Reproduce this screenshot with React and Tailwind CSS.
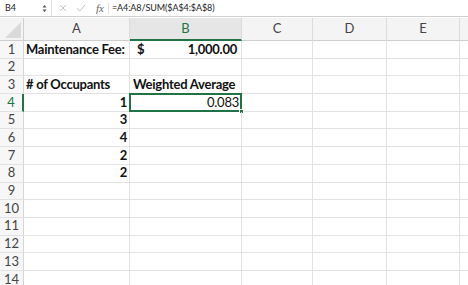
import React from "react";

const cols = ["A", "B", "C", "D", "E"];
const F = { fontFamily: "Lato, 'Open Sans', sans-serif" };

function Cell({ children, className = "" }) {
  return (
    <div className={`border-r border-b border-[#e2e2e2] flex items-center overflow-visible whitespace-nowrap ${className}`}>
      {children}
    </div>
  );
}

export default function App() {
  const rows = [];
  for (let r = 1; r <= 14; r++) rows.push(r);
  const data = {
    1: { a: <span className="font-bold pl-[2px]">Maintenance Fee:</span>, b: <div className="flex w-full justify-between font-bold pl-[7px] pr-[4px]"><span>$</span><span>1,000.00</span></div> },
    3: { a: <span className="font-bold pl-[2px]">&#35; of Occupants</span>, b: <span className="font-bold pl-[3px]">Weighted Average</span> },
    4: { a: <span className="font-bold w-full text-right pr-[2px]">1</span>, b: <span className="w-full text-right pr-[2px]">0.083</span> },
    5: { a: <span className="font-bold w-full text-right pr-[2px]">3</span> },
    6: { a: <span className="font-bold w-full text-right pr-[2px]">4</span> },
    7: { a: <span className="font-bold w-full text-right pr-[2px]">2</span> },
    8: { a: <span className="font-bold w-full text-right pr-[2px]">2</span> },
  };
  return (
    <div className="w-[468px] h-[285px] overflow-hidden bg-white text-[#111]" style={F}>
      {/* formula bar */}
      <div className="h-[17px] flex items-center border-b border-[#d0d0d0] bg-white text-[9px]">
        <div className="w-[52px] h-full flex items-center justify-between pl-[5px] pr-[4px] border-r border-[#e0e0e0]">
          <span className="text-[#222]">B4</span>
          <svg width="5" height="9" viewBox="0 0 5 9"><path d="M0.5 3.5 L2.5 1 L4.5 3.5 Z M0.5 5.5 L2.5 8 L4.5 5.5 Z" fill="#555" /></svg>
        </div>
        <div className="flex items-center gap-[9px] pl-[7px]">
          <svg width="8" height="8" viewBox="0 0 8 8"><path d="M1 1 L7 7 M7 1 L1 7" stroke="#c4c4c4" strokeWidth="1" /></svg>
          <svg width="10" height="8" viewBox="0 0 10 8"><path d="M1 4.2 L3.8 7 L9 1" stroke="#c4c4c4" strokeWidth="1" fill="none" /></svg>
        </div>
        <span className="italic text-[11px] text-[#666] ml-[10px] leading-none" style={{ fontFamily: "'Liberation Serif', serif" }}>fx</span>
        <div className="h-[11px] border-l border-[#e0e0e0] ml-[4px] mr-[3px]" />
        <span className="text-[9px] text-[#222] tracking-[-0.1px]">=A4:A8/SUM($A$4:$A$8)</span>
      </div>
      <div className="h-[1px] bg-white" />
      {/* grid */}
      <div className="grid grid-cols-[24px_106px_112px_71px_74px_73px_1fr] grid-rows-[23px]" style={{ gridAutoRows: "17.7px" }}>
        <div className="bg-[#f4f4f4] border-b border-r border-[#cfcfcf] relative">
          <svg className="absolute right-[2px] bottom-[2px]" width="16" height="16" viewBox="0 0 16 16"><path d="M16 0 L16 16 L0 16 Z" fill="#dadada" /></svg>
        </div>
        {cols.map((c) => (
          <div
            key={c}
            className={`flex items-center justify-center text-[13px] border-r border-[#dcdcdc] ${c === "B" ? "bg-[#e6e6e6] text-[#217346] border-b-2 border-b-[#217346]" : "bg-[#f4f4f4] text-[#444] border-b border-b-[#cfcfcf]"}`}
          >
            {c}
          </div>
        ))}
        <div className="bg-[#f4f4f4] border-b border-[#cfcfcf]" />
        {rows.map((r) => (
          <React.Fragment key={r}>
            <div className={`flex items-center justify-center text-[13px] border-b border-[#e2e2e2] bg-[#f7f7f7] ${r === 4 ? "text-[#217346] border-r-2 border-r-[#217346]" : "text-[#444] border-r border-r-[#d6d6d6]"}`}>
              {r}
            </div>
            <Cell className="text-[13px] tracking-[-0.25px]">{data[r]?.a}</Cell>
            <Cell className="text-[13px] tracking-[-0.25px] relative">
              {data[r]?.b}
              {r === 4 && (
                <>
                  <div className="absolute left-[-1px] top-[-1px] right-[-1px] bottom-[-1px] border-2 border-[#217346] pointer-events-none" />
                  <div className="absolute right-[-3px] bottom-[-3px] w-[5px] h-[5px] bg-[#217346] border border-white" />
                </>
              )}
            </Cell>
            <Cell />
            <Cell />
            <Cell />
            <Cell className="border-r-0" />
          </React.Fragment>
        ))}
      </div>
    </div>
  );
}
